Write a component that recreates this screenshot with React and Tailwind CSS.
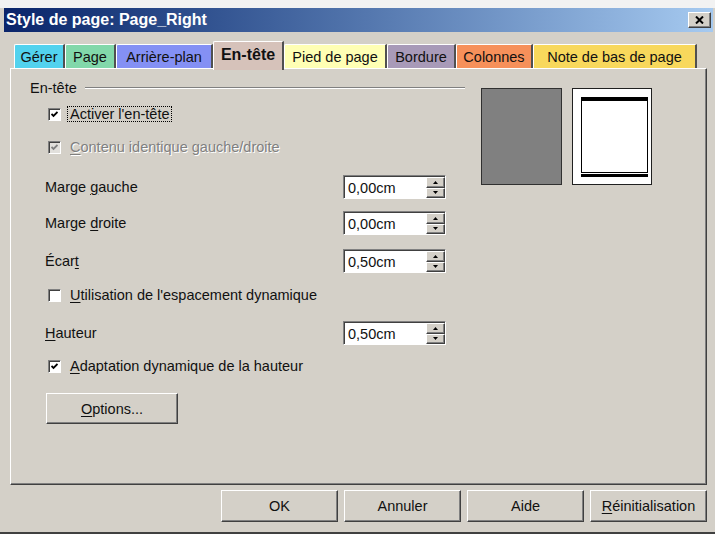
import React from "react";

// classic 3D bevels
const raised =
  "border border-t-white border-l-white border-r-[#404040] border-b-[#404040] shadow-[inset_-1px_-1px_0_#808080]";
const sunken =
  "border border-t-[#808080] border-l-[#808080] border-r-white border-b-white shadow-[inset_1px_1px_0_#404040]";

const tabs = [
  { label: "Gérer", w: "w-[51px]", bg: "bg-[#52d2ee]" },
  { label: "Page", w: "w-[51px]", bg: "bg-[#82d8aa]" },
  { label: "Arrière-plan", w: "w-[97px]", bg: "bg-[#8490f4]" },
  { label: "En-tête", w: "w-[71px]", bg: "bg-[#d6c2ba]", active: true },
  { label: "Pied de page", w: "w-[103px]", bg: "bg-[#ffffb4]" },
  { label: "Bordure", w: "w-[69px]", bg: "bg-[#a89ab8]" },
  { label: "Colonnes", w: "w-[77px]", bg: "bg-[#f6905a]" },
  { label: "Note de bas de page", w: "w-[164px]", bg: "bg-[#f8d85c]" },
];

const Tab = ({ tab }) =>
  tab.active ? (
    <div
      className={`${tab.w} ${tab.bg} h-[29px] -mb-[2px] relative z-10 flex items-center justify-center border-t border-l border-t-white border-l-white border-r-2 border-r-[#505050] rounded-tl-[2px] text-[16px] font-bold pb-[3px]`}
    >
      {tab.label}
    </div>
  ) : (
    <div
      className={`${tab.w} ${tab.bg} h-[24px] flex items-center justify-center border-t border-l border-t-white border-l-white border-r-2 border-r-[#505050] rounded-tl-[2px]`}
    >
      {tab.label}
    </div>
  );

const CheckBox = ({ checked, disabled }) => (
  <div
    className={`w-[13px] h-[13px] shrink-0 flex items-center justify-center ${sunken} ${
      disabled ? "bg-[#e2e0dc]" : "bg-white"
    }`}
  >
    {checked && (
      <svg width="7" height="7" viewBox="0 0 7 7">
        <polyline
          points="0.5,3 2.5,5 6.5,1"
          fill="none"
          stroke={disabled ? "#808080" : "#000"}
          strokeWidth="1.8"
        />
      </svg>
    )}
  </div>
);

const SpinBtn = ({ up }) => (
  <div className={`flex-1 bg-[#d4d0c8] flex items-center justify-center ${raised}`}>
    <svg width="5" height="3" viewBox="0 0 5 3">
      <path d={up ? "M2.5 0 L5 3 L0 3 Z" : "M0 0 L5 0 L2.5 3 Z"} fill="#000" />
    </svg>
  </div>
);

const Spin = ({ value }) => (
  <div className={`w-[103px] h-[24px] flex bg-white ${sunken} pt-[1px] pl-[1px]`}>
    <div className="flex-1 pl-[3px] flex items-center">{value}</div>
    <div className="w-[19px] flex flex-col">
      <SpinBtn up />
      <SpinBtn />
    </div>
  </div>
);

const Field = ({ label, value, className }) => (
  <div className={`h-[24px] w-[416px] pl-[15px] flex items-center justify-between ${className}`}>
    <span>{label}</span>
    <Spin value={value} />
  </div>
);

const Button = ({ children, className }) => (
  <div className={`h-[32px] bg-[#d4d0c8] flex items-center justify-center ${raised} ${className}`}>
    {children}
  </div>
);

const PagePreview = () => (
  <svg width="80" height="97" viewBox="0 0 80 97">
    <rect x="0.5" y="0.5" width="79" height="96" fill="#fff" stroke="#202020" />
    <rect x="9.5" y="12.5" width="66" height="72" fill="none" stroke="#000" />
    <rect x="9" y="9" width="67" height="3" fill="#000" />
    <rect x="9" y="86" width="67" height="3" fill="#000" />
  </svg>
);

export default function App() {
  return (
    <div className="w-[715px] h-[534px] bg-[#d4d0c8] flex flex-col text-[14.5px] leading-[16px] text-[#111] font-['Liberation_Sans',Arial,sans-serif] overflow-hidden">
      <div className="h-[8px] bg-[#f2f2f2]" />

      {/* title bar */}
      <div className="h-[24px] ml-[4px] mr-[2px] bg-gradient-to-r from-[#0a246a] to-[#a6caf0] flex items-center justify-between">
        <span className="pl-[2px] text-white font-bold text-[16px]">Style de page: Page_Right</span>
        <div className={`w-[23px] h-[16px] mr-[2px] bg-[#d4d0c8] flex items-center justify-center ${raised}`}>
          <svg width="9" height="8" viewBox="0 0 9 8">
            <path d="M1 0.5 L8 7.5 M8 0.5 L1 7.5" stroke="#000" strokeWidth="2" />
          </svg>
        </div>
      </div>

      {/* tabs */}
      <div className="mt-[9px] h-[27px] pl-[14px] flex items-end">
        {tabs.map((t) => (
          <Tab key={t.label} tab={t} />
        ))}
      </div>

      {/* page */}
      <div className="h-[417px] ml-[10px] mr-[8px] border border-t-white border-l-white border-r-[#404040] border-b-[#404040] shadow-[inset_-1px_-1px_0_#808080] flex pl-[19px]">
        <div className="w-[435px] flex flex-col">
          <div className="mt-[11px] h-[16px] flex items-center">
            <span>En-tête</span>
            <div className="ml-[8px] flex-1 border-t border-t-[#808080] border-b border-b-white" />
          </div>

          <div className="mt-[10px] h-[16px] pl-[18px] flex items-center gap-[6px]">
            <CheckBox checked />
            <span className="border border-dotted border-black px-[2px] leading-[14px]">
              Activer l'en-tête
            </span>
          </div>

          <div className="mt-[17px] h-[16px] pl-[18px] flex items-center gap-[9px]">
            <CheckBox checked disabled />
            <span className="text-[#808080] [text-shadow:1px_1px_0_#fff]">
              <u className="underline-offset-2">C</u>ontenu identique gauche/droite
            </span>
          </div>

          <Field
            className="mt-[20px]"
            label={
              <>
                Marge <u className="underline-offset-2">g</u>auche
              </>
            }
            value="0,00cm"
          />
          <Field
            className="mt-[12px]"
            label={
              <>
                Marge <u className="underline-offset-2">d</u>roite
              </>
            }
            value="0,00cm"
          />
          <Field
            className="mt-[14px]"
            label={
              <>
                Écar<u className="underline-offset-2">t</u>
              </>
            }
            value="0,50cm"
          />

          <div className="mt-[14px] h-[16px] pl-[18px] flex items-center gap-[9px]">
            <CheckBox />
            <span>
              <u className="underline-offset-2">U</u>tilisation de l'espacement dynamique
            </span>
          </div>

          <Field
            className="mt-[18px]"
            label={
              <>
                <u className="underline-offset-2">H</u>auteur
              </>
            }
            value="0,50cm"
          />

          <div className="mt-[13px] h-[16px] pl-[18px] flex items-center gap-[9px]">
            <CheckBox checked />
            <span>
              <u className="underline-offset-2">A</u>daptation dynamique de la hauteur
            </span>
          </div>

          <Button className="mt-[19px] ml-[16px] w-[132px] !h-[31px]">
            <span>
              <u className="underline-offset-2">O</u>ptions...
            </span>
          </Button>
        </div>

        <div className="ml-[16px] mt-[19px] flex gap-[10px] items-start">
          <div className="w-[81px] h-[97px] bg-[#808080] border border-[#303030]" />
          <PagePreview />
        </div>
      </div>

      {/* dialog buttons */}
      <div className="mt-[5px] pr-[8px] flex justify-end gap-[6px]">
        <Button className="w-[117px]">OK</Button>
        <Button className="w-[117px]">Annuler</Button>
        <Button className="w-[117px]">Aide</Button>
        <Button className="w-[117px]">
          <span>
            <u className="underline-offset-2">R</u>éinitialisation
          </span>
        </Button>
      </div>

      <div className="mt-auto h-[2px] bg-[#404040]" />
    </div>
  );
}
